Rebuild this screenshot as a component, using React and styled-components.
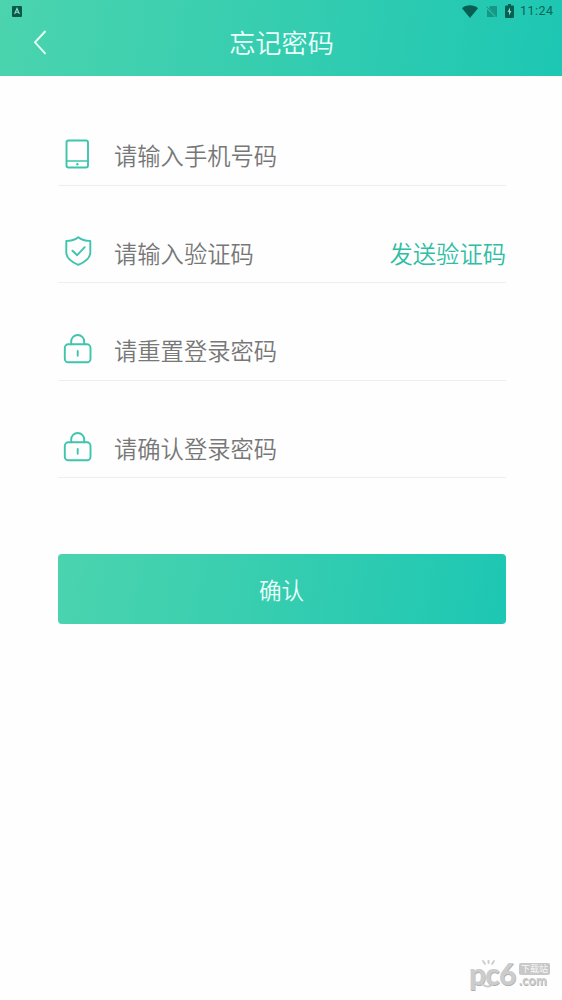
import React from "react"
import styled, { createGlobalStyle } from "styled-components"

const GlobalStyle = createGlobalStyle`
  * {
    box-sizing: border-box;
  }

  body {
    margin: 0;
    background: #fefefe;
    font-family: "Noto Sans CJK SC", "Noto Sans", sans-serif;
  }
`

const Screen = styled.div`
  position: relative;
  width: 562px;
  height: 1000px;
  overflow: hidden;
`

const Header = styled.header`
  height: 76px;
  background: linear-gradient(100deg, #4bd4ae 0%, #35cdb0 50%, #1dc7b3 100%);
`

const StatusBar = styled.div`
  height: 22px;
  padding: 0 8px 0 12px;
  display: flex;
  align-items: center;
  justify-content: space-between;
  color: #0b6457;
`

const StatusIcons = styled.div`
  display: flex;
  align-items: center;
  gap: 8px;

  svg {
    display: block;
  }
`

const Clock = styled.span`
  width: 34px;
  margin-left: -2px;
  font-family: Roboto, sans-serif;
  font-size: 12.5px;
  line-height: 24px;
  letter-spacing: 0.45px;
  white-space: nowrap;
`

const TitleBar = styled.div`
  height: 42px;
  padding: 0 33px;
  display: grid;
  grid-template-columns: 40px 1fr 40px;
  align-items: center;
`

const BackButton = styled.button`
  height: 40px;
  padding: 0;
  border: 0;
  background: none;
  text-align: left;

  svg {
    display: block;
  }
`

const Title = styled.h1`
  margin: 0;
  padding: 0 0 2px 1px;
  font-size: 26.2px;
  font-weight: 350;
  line-height: 40px;
  text-align: center;
  color: #ecfffa;
`

const Form = styled.form`
  padding: 12px 56px 0 58px;
`

const Field = styled.label`
  height: 97.6px;
  padding-top: 38px;
  display: flex;
  align-items: center;
  border-bottom: 1px solid #eeeeee;

  svg {
    flex: none;
    margin: 0 16px 3px 0;
  }
`

const Placeholder = styled.span`
  flex: 1;
  font-size: 23.3px;
  font-weight: 350;
  line-height: 34px;
  color: #777777;
`

const SendCode = styled.button`
  padding: 0;
  border: 0;
  background: none;
  font: inherit;
  font-size: 23.3px;
  font-weight: 350;
  line-height: 34px;
  color: #2fbda3;
`

const Submit = styled.button`
  width: 448px;
  height: 70px;
  margin-top: 76px;
  padding: 0 1px 0 0;
  display: block;
  border: 0;
  border-radius: 4px;
  background: linear-gradient(100deg, #4bd4ae 0%, #35cdb0 50%, #1dc7b3 100%);
  font: inherit;
  font-size: 22.6px;
  font-weight: 350;
  color: #ecfffa;
`

const Watermark = styled.div`
  position: absolute;
  right: 12px;
  bottom: 10px;
  display: flex;
  color: #cccccc;
  font-family: Lato, sans-serif;
  text-shadow: 0.5px 0.5px 0 #b0b0b0;
`

const WatermarkName = styled.span`
  position: relative;
  width: 50px;
  height: 30px;
  font-size: 30px;
  font-weight: 900;
  line-height: 26px;
  letter-spacing: -0.8px;

  svg {
    position: absolute;
    left: 10px;
    top: 0;
  }
`

const WatermarkSide = styled.span`
  width: 31px;
  display: flex;
  flex-direction: column;
`

const WatermarkTag = styled.span`
  height: 12px;
  margin-top: 3px;
  border-radius: 2px;
  background: #c8c8c8;
  font-family: "Noto Sans CJK SC", sans-serif;
  font-size: 9px;
  font-weight: 400;
  line-height: 11px;
  text-align: center;
  text-shadow: none;
  color: #f7f7f7;
`

const WatermarkDomain = styled.span`
  font-size: 13px;
  font-weight: 700;
  line-height: 10px;
  letter-spacing: 0.1px;
`

const LineIcon = ({ children }) => (
  <svg
    width="40"
    height="36"
    viewBox="0 0 40 36"
    fill="none"
    stroke="#3fc4ad"
    strokeWidth="1.9"
    strokeLinecap="round"
    strokeLinejoin="round"
  >
    {children}
  </svg>
)

const PhoneIcon = () => (
  <LineIcon>
    <rect x="8.5" y="4.5" width="21.5" height="27" rx="2" />
    <path d="M8.5 25h21.5" strokeWidth="1.5" />
    <circle cx="19.3" cy="28.2" r="1.2" fill="#3fc4ad" stroke="none" />
  </LineIcon>
)

const ShieldIcon = () => (
  <LineIcon>
    <path d="M20.3 4.2c3 2.5 7 3.7 12 3.7v11.6c0 6-5.500 9.700-12 12.300-6.500-2.600-12-6.300-12-12.300V7.900c5 0 9-1.200 12-3.700z" />
    <path d="M14.500 17.700l4.700 4.500 7.500-8" />
  </LineIcon>
)

const LockIcon = () => (
  <LineIcon>
    <rect x="6.800" y="13.300" width="25.700" height="18" rx="3.500" />
    <path d="M13.200 13.300v-2.800a6.500 6.500 0 0 1 13 0v2.800M19.700 20v4.700" />
  </LineIcon>
)

const fields = [
  { text: "请输入手机号码", icon: PhoneIcon },
  { text: "请输入验证码", icon: ShieldIcon, action: "发送验证码" },
  { text: "请重置登录密码", icon: LockIcon },
  { text: "请确认登录密码", icon: LockIcon },
]

export default () => {
  return (
    <Screen>
      <GlobalStyle />
      <Header>
        <StatusBar>
          <svg width="10" height="11" viewBox="0 0 10 11">
            <rect width="10" height="11" rx="1" fill="#08594c" />
            <path d="M2.600 8L5 2.500 7.400 8M3.500 6.200h3" fill="none" stroke="#8fe0ca" strokeWidth="1.100" />
          </svg>
          <StatusIcons>
            <svg width="16" height="13" viewBox="0 0 16 13">
              <path d="M0 3.200C4.500-.6 11.500-.6 16 3.200L8 13z" fill="#075f53" />
            </svg>
            <svg width="11" height="13" viewBox="0 0 11 13">
              <path d="M4 1h7v11L3 3zM1 4l8 8H1z" fill="#159783" />
              <path d="M.5 1.500l10 10.500" stroke="#159783" />
            </svg>
            <svg width="9" height="14" viewBox="0 0 9 14">
              <path d="M3 0h3v1.500h2q1 0 1 1V13q0 1-1 1H1q-1 0-1-1V2.500q0-1 1-1h2z" fill="#075f53" />
              <path d="M5 3.500L2.500 8H4v3.500L6.500 7H5z" fill="#7cddc9" />
            </svg>
            <Clock>11:24</Clock>
          </StatusIcons>
        </StatusBar>
        <TitleBar>
          <BackButton type="button" aria-label="返回">
            <svg width="16" height="28" viewBox="0 0 16 28">
              <path d="M12.500 2L2 13.300 12.500 24.800" fill="none" stroke="#e6fff7" strokeWidth="1.900" />
            </svg>
          </BackButton>
          <Title>忘记密码</Title>
        </TitleBar>
      </Header>
      <Form>
        {fields.map(({ text, icon: Icon, action }) => (
          <Field key={text}>
            <Icon />
            <Placeholder>{text}</Placeholder>
            {action && <SendCode type="button">{action}</SendCode>}
          </Field>
        ))}
        <Submit type="button">确认</Submit>
      </Form>
      <Watermark>
        <WatermarkName>
          pc6
          <svg width="20" height="29" viewBox="0 0 20 29" fill="none" stroke="#cccccc" strokeWidth="1.800" strokeLinecap="round">
            <path d="M4 1l2 3M9.500 0v3M15 1l-2 3M3 24q6 5 11 0" />
          </svg>
        </WatermarkName>
        <WatermarkSide>
          <WatermarkTag>下载站</WatermarkTag>
          <WatermarkDomain>.com</WatermarkDomain>
        </WatermarkSide>
      </Watermark>
    </Screen>
  )
}
